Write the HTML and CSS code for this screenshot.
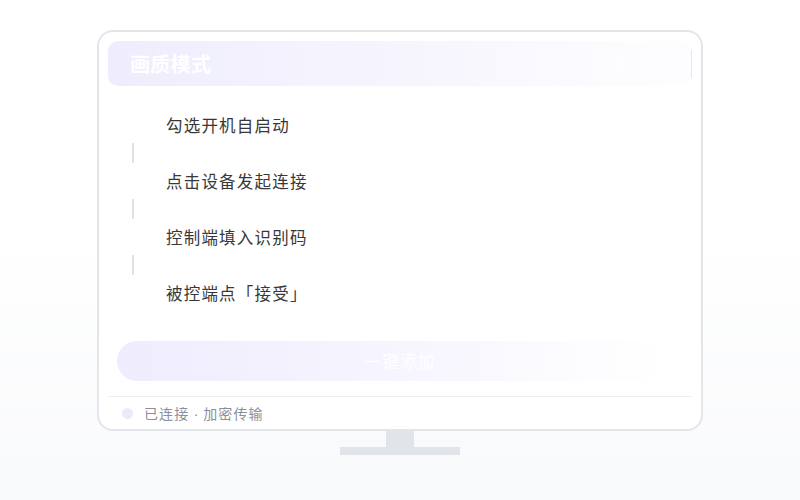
FILE: index.html
```html
<!DOCTYPE html>
<html lang="zh">
<head>
<meta charset="utf-8">
<title>画质模式</title>
<link rel="stylesheet" href="styles.css">
</head>
<body>
<div class="monitor">
  <div class="screen">
    <div class="header">
      <span class="title">画质模式</span>
      <div class="tools">
        <svg class="ico" viewBox="0 0 20 20" width="18" height="18"><circle cx="10" cy="10" r="3" fill="none" stroke="#fff" stroke-width="2"/><path d="M10 2v3M10 15v3M2 10h3M15 10h3" stroke="#fff" stroke-width="2"/></svg>
        <svg class="ico" viewBox="0 0 20 20" width="18" height="18"><path d="M4 10h12" stroke="#fff" stroke-width="2"/></svg>
        <svg class="ico" viewBox="0 0 20 20" width="18" height="18"><path d="M5 5l10 10M15 5L5 15" stroke="#fff" stroke-width="2"/></svg>
        <span class="vbar"></span>
      </div>
    </div>
    <ol class="steps">
      <li class="step"><span class="dot">1</span><span class="label">勾选开机自启动</span></li>
      <li class="link"></li>
      <li class="step"><span class="dot">2</span><span class="label">点击设备发起连接</span></li>
      <li class="link"></li>
      <li class="step"><span class="dot">3</span><span class="label">控制端填入识别码</span></li>
      <li class="link"></li>
      <li class="step"><span class="dot">4</span><span class="label">被控端点「接受」</span></li>
    </ol>
    <button class="cta">一键添加</button>
    <div class="status">
      <span class="led"></span>
      <span class="status-text">已连接<span class="sep"> · </span>加密传输</span>
    </div>
  </div>
  <div class="neck"></div>
  <div class="base"></div>
</div>
</body>
</html>
```

FILE: styles.css
```css
html, body {
  margin: 0;
  padding: 0;
}
body {
  width: 800px;
  height: 500px;
  background: linear-gradient(180deg, #ffffff 0%, #ffffff 48%, #f8f9fb 100%);
  font-family: "Noto Sans CJK SC", "Noto Sans", sans-serif;
  display: flex;
  justify-content: center;
  align-items: flex-start;
}
.monitor {
  margin-top: 30px;
  width: 606px;
  display: flex;
  flex-direction: column;
  align-items: center;
}
.screen {
  box-sizing: border-box;
  width: 606px;
  border: 2px solid #e2e5ea;
  border-radius: 16px;
  background: #ffffff;
  padding: 9px 9px 0;
  display: flex;
  flex-direction: column;
}
.header {
  height: 45px;
  border-radius: 10px;
  background: linear-gradient(90deg, #efedfd 0%, #f6f5fe 50%, #fdfdff 95%);
  display: flex;
  align-items: center;
  justify-content: space-between;
  padding: 0 0 0 22px;
}
.title {
  color: #ffffff;
  font-size: 20px;
  font-weight: 700;
  letter-spacing: 0.3px;
}
.tools {
  display: flex;
  align-items: center;
  gap: 4px;
  height: 100%;
}
.ico {
  opacity: 0.9;
}
.vbar {
  width: 1px;
  height: 28px;
  background: #e6e8ee;
  margin-left: 12px;
}
.steps {
  list-style: none;
  margin: 0;
  padding: 29px 0 0 15px;
  display: flex;
  flex-direction: column;
}
.step {
  height: 20px;
  display: flex;
  align-items: center;
  gap: 23px;
}
.dot {
  width: 20px;
  height: 20px;
  border-radius: 50%;
  background: #ffffff;
  color: #ffffff;
  font-size: 12px;
  display: flex;
  align-items: center;
  justify-content: center;
  flex: none;
}
.label {
  color: #383838;
  font-size: 16.5px;
  letter-spacing: 1.2px;
  line-height: 20px;
}
.link {
  width: 2px;
  height: 20px;
  margin: 8px 0 8px 9px;
  background: #e0e2e8;
}
.cta {
  margin: 38px 9px 0;
  height: 40px;
  border: none;
  border-radius: 20px;
  background: linear-gradient(90deg, #efecfd 0%, #f6f4fe 45%, #ffffff 97%);
  color: #ffffff;
  font-family: "Noto Sans CJK SC", "Noto Sans", sans-serif;
  font-size: 16.5px;
  letter-spacing: 1.2px;
  padding: 0;
}
.status {
  margin-top: 15px;
  border-top: 1px solid #eceef2;
  height: 32px;
  display: flex;
  align-items: center;
  padding-left: 14px;
  gap: 11px;
}
.led {
  width: 11px;
  height: 11px;
  border-radius: 50%;
  background: #ece9fc;
}
.status-text {
  color: #8a8f99;
  font-size: 14px;
  letter-spacing: 1.1px;
}
.sep {
  font-family: "Liberation Sans", sans-serif;
  letter-spacing: 0.5px;
}
.neck {
  width: 28px;
  height: 16px;
  background: #e1e4e8;
}
.base {
  width: 120px;
  height: 8px;
  background: #e1e4e8;
}
```
